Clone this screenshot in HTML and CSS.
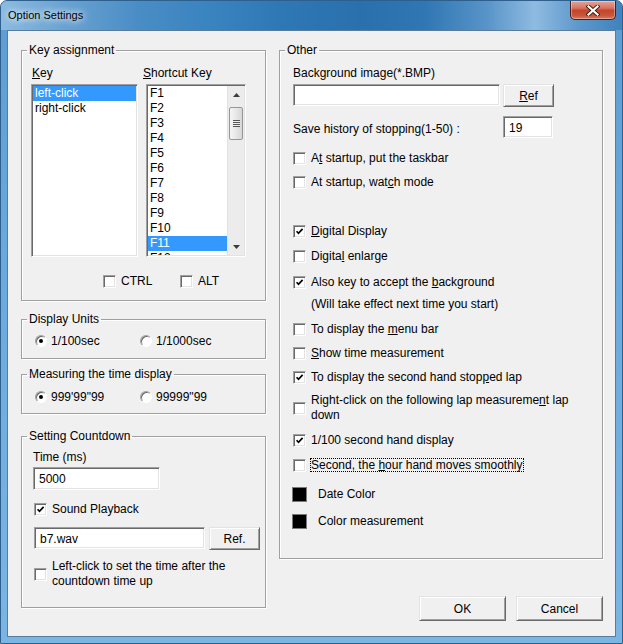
FILE: index.html
```html
<!DOCTYPE html>
<html>
<head>
<meta charset="utf-8">
<title>Option Settings</title>
<link rel="stylesheet" href="styles.css">
</head>
<body>
<div class="window">
  <div class="titlebar">
    <span class="title">Option Settings</span>
    <div class="close">
      <svg width="14" height="11" viewBox="0 0 14 11">
        <path d="M2.5 1.5 L11.5 9.5 M11.5 1.5 L2.5 9.5" stroke="#3b1d17" stroke-width="4" stroke-linecap="square"/>
        <path d="M2.5 1.5 L11.5 9.5 M11.5 1.5 L2.5 9.5" stroke="#ffffff" stroke-width="2.2" stroke-linecap="square"/>
      </svg>
    </div>
  </div>
  <div class="client">
    <div class="col-left">
      <fieldset class="group g-keys">
        <legend>Key assignment</legend>
        <div class="gbody keys-body">
          <div class="keys">
            <div class="keycol">
              <div class="lbl lbl-key"><u>K</u>ey</div>
              <div class="listbox lb-key">
                <div class="items">
                  <div class="item sel">left-click</div>
                  <div class="item">right-click</div>
                </div>
              </div>
            </div>
            <div class="keycol">
              <div class="lbl lbl-sc"><u>S</u>hortcut Key</div>
              <div class="listbox lb-sc">
                <div class="items">
                  <div class="item">F1</div>
                  <div class="item">F2</div>
                  <div class="item">F3</div>
                  <div class="item">F4</div>
                  <div class="item">F5</div>
                  <div class="item">F6</div>
                  <div class="item">F7</div>
                  <div class="item">F8</div>
                  <div class="item">F9</div>
                  <div class="item">F10</div>
                  <div class="item sel">F11</div>
                  <div class="item">F12</div>
                </div>
                <div class="sb">
                  <div class="sb-btn"><svg width="7" height="4" viewBox="0 0 7 4"><path d="M0 4 L3.5 0 L7 4Z" fill="#3c3c3c"/></svg></div>
                  <div class="sb-track">
                    <div class="sb-thumb"><span class="grip"></span></div>
                  </div>
                  <div class="sb-btn"><svg width="7" height="4" viewBox="0 0 7 4"><path d="M0 0 L3.5 4 L7 0Z" fill="#3c3c3c"/></svg></div>
                </div>
              </div>
            </div>
          </div>
          <div class="mods">
            <div class="chk w77"><span class="box"></span><span>CTRL</span></div>
            <div class="chk"><span class="box"></span><span>ALT</span></div>
          </div>
        </div>
      </fieldset>

      <fieldset class="group g-units">
        <legend>Display Units</legend>
        <div class="gbody radio-body">
          <div class="radios">
            <div class="rad"><span class="circle"><span class="dot"></span></span><span>1/100sec</span></div>
            <div class="rad"><span class="circle"></span><span>1/1000sec</span></div>
          </div>
        </div>
      </fieldset>

      <fieldset class="group g-measure">
        <legend>Measuring the time display</legend>
        <div class="gbody radio-body2">
          <div class="radios">
            <div class="rad"><span class="circle"><span class="dot"></span></span><span>999'99"99</span></div>
            <div class="rad"><span class="circle"></span><span>99999"99</span></div>
          </div>
        </div>
      </fieldset>

      <fieldset class="group g-count">
        <legend>Setting Countdown</legend>
        <div class="gbody count-body">
          <div class="lbl">Time (ms)</div>
          <div class="tb tb-time">5000</div>
          <div class="chk sound"><span class="box"><svg class="tick" width="9" height="9" viewBox="0 0 9 9"><path d="M1.6 4.2 L3.5 6.3 L7.6 1.9" fill="none" stroke="#000" stroke-width="1.7"/></svg></span><span>Sound Playback</span></div>
          <div class="wavrow">
            <div class="tb tb-wav">b7.wav</div>
            <div class="btn btn-ref">Ref.</div>
          </div>
          <div class="chk chk2 after"><span class="box"></span><span class="two">Left-click to set the time after the<br>countdown time up</span></div>
        </div>
      </fieldset>
    </div>

    <div class="col-right">
      <fieldset class="group g-other">
        <legend>Other</legend>
        <div class="gbody other-body">
          <div class="lbl">Background image(*.BMP)</div>
          <div class="bgrow">
            <div class="tb tb-bg"></div>
            <div class="btn btn-ref2"><u>R</u>ef</div>
          </div>
          <div class="histrow">
            <div class="histlbl">Save history of stopping(1-50) :</div>
            <div class="tb tb-hist">19</div>
          </div>

          <div class="chk r1"><span class="box"></span><span>A<u>t</u> startup, put the taskbar</span></div>
          <div class="chk r8"><span class="box"></span><span>At startup, wat<u>c</u>h mode</span></div>
          <div class="chk r33"><span class="box"><svg class="tick" width="9" height="9" viewBox="0 0 9 9"><path d="M1.6 4.2 L3.5 6.3 L7.6 1.9" fill="none" stroke="#000" stroke-width="1.7"/></svg></span><span><u>D</u>igital Display</span></div>
          <div class="chk r9"><span class="box"></span><span>Digita<u>l</u> enlarge</span></div>
          <div class="chk r10"><span class="box"><svg class="tick" width="9" height="9" viewBox="0 0 9 9"><path d="M1.6 4.2 L3.5 6.3 L7.6 1.9" fill="none" stroke="#000" stroke-width="1.7"/></svg></span><span>Also key to accept the <u>b</u>ackground</span></div>
          <div class="note">(Will take effect next time you start)</div>
          <div class="chk r9"><span class="box"></span><span>To display the <u>m</u>enu bar</span></div>
          <div class="chk r8"><span class="box"></span><span><u>S</u>how time measurement</span></div>
          <div class="chk r8"><span class="box"><svg class="tick" width="9" height="9" viewBox="0 0 9 9"><path d="M1.6 4.2 L3.5 6.3 L7.6 1.9" fill="none" stroke="#000" stroke-width="1.7"/></svg></span><span>To display the second hand stop<u>p</u>ed lap</span></div>
          <div class="chk chk2 r8"><span class="box"></span><span class="two">Right-click on the following lap measureme<u>n</u>t lap<br>down</span></div>
          <div class="chk r9"><span class="box"><svg class="tick" width="9" height="9" viewBox="0 0 9 9"><path d="M1.6 4.2 L3.5 6.3 L7.6 1.9" fill="none" stroke="#000" stroke-width="1.7"/></svg></span><span>1/100 second hand display</span></div>
          <div class="chk r9"><span class="box"></span><span class="focus">Second, the <u>h</u>our hand moves smoothly</span></div>

          <div class="colorrow c1"><span class="swatch"></span><span>Date Color</span></div>
          <div class="colorrow c2"><span class="swatch"></span><span>Color measurement</span></div>
        </div>
      </fieldset>
      <div class="actions">
        <div class="btn btn-dlg">OK</div>
        <div class="btn btn-dlg">Cancel</div>
      </div>
    </div>
  </div>
</div>
</body>
</html>
```

FILE: styles.css
```css
* { box-sizing: border-box; }

body {
  margin: 0;
  font-family: "Liberation Sans", Arial, sans-serif;
  font-size: 12px;
  color: #000;
  background: #ffffff;
}

u { text-decoration: underline; text-underline-offset: 1px; }

.window {
  width: 623px;
  height: 644px;
  border: 1px solid #2f5f8c;
  border-radius: 7px 7px 0 0;
  background: linear-gradient(to bottom, #5d9cd2 0%, #6aa9dc 40%, #79b6e4 100%);
  display: flex;
  flex-direction: column;
  overflow: hidden;
}

.titlebar {
  height: 29px;
  display: flex;
  align-items: flex-start;
  padding-left: 7px;
  background: linear-gradient(to right, #8bbbe0 0%, #6aa3d2 10%, #4a8dc5 22%, #3a84c0 33%, #2e78b5 45%, #2a70ad 58%, #2f76b3 68%, #5793c8 78%, #8ebbe0 86%, #5e98cc 93%, #3f82bd 100%);
}

.title {
  font-size: 11px;
  line-height: 13px;
  margin-top: 8px;
  color: #000;
  text-shadow: 0 0 6px #fff, 0 0 10px rgba(255,255,255,0.9);
}

.close {
  margin-left: auto;
  margin-right: 6px;
  width: 46px;
  height: 19px;
  border: 1px solid #4a1f18;
  border-top: none;
  border-radius: 0 0 5px 5px;
  background: linear-gradient(to bottom, #e5a496 0%, #d6735f 40%, #c2452c 52%, #c9553a 80%, #d77a5e 100%);
  box-shadow: inset 0 0 0 1px rgba(255,255,255,0.35);
  display: flex;
  align-items: center;
  justify-content: center;
}

.client {
  margin: 0 6px 6px 6px;
  flex: 1;
  background: #f0f0f0;
  border: 1px solid #5a7c9b;
  display: flex;
  align-items: flex-start;
  gap: 13px;
  padding: 12px 12px 0 13px;
}

.col-left { width: 245px; display: flex; flex-direction: column; }
.col-right { width: 324px; display: flex; flex-direction: column; }

.group {
  margin: 0;
  padding: 0;
  min-width: 0;
  border: 1px solid #a0a0a0;
  box-shadow: inset 1px 1px 0 #ffffff, 1px 1px 0 #ffffff;
}

.group legend {
  padding: 0 2px;
  margin-left: 5px;
  line-height: 14px;
  height: 14px;
}

.g-keys { height: 258px; }
.g-units { height: 47px; margin-top: 11px; }
.g-measure { height: 47px; margin-top: 8px; }
.g-count { height: 179px; margin-top: 15px; }
.g-other { height: 516px; }

.lbl { line-height: 14px; height: 14px; }

/* key assignment */
.keys-body { padding: 9px 0 0 9px; }
.keys { display: flex; gap: 8px; }
.keycol { display: flex; flex-direction: column; }
.lbl-key { padding-left: 1px; margin-bottom: 4px; }
.lbl-sc { margin-left: -3px; margin-bottom: 4px; }

.listbox {
  height: 173px;
  background: #fff;
  border: 1px solid;
  border-color: #a0a0a0 #ffffff #ffffff #a0a0a0;
  box-shadow: inset 1px 1px 0 #696969, inset -1px -1px 0 #e3e3e3;
  padding: 1px;
  display: flex;
  overflow: hidden;
}
.lb-key { width: 107px; }
.lb-sc { width: 100px; }

.items { flex: 1; overflow: hidden; }
.item { height: 15px; line-height: 15px; padding-left: 2px; white-space: nowrap; }
.item.sel { background: #3399ff; color: #fff; }

.sb {
  width: 17px;
  display: flex;
  flex-direction: column;
  background: #ececec;
  border-left: 1px solid #e2e2e2;
}
.sb-btn { height: 17px; display: flex; align-items: center; justify-content: center; }
.sb-track { flex: 1; padding: 4px 1px 0 1px; }
.sb-thumb {
  height: 33px;
  border: 1px solid #979797;
  border-radius: 2px;
  background: linear-gradient(to right, #f5f5f5 0%, #e8e8e8 50%, #d6d6d6 100%);
  display: flex;
  align-items: center;
  justify-content: center;
}
.grip {
  width: 7px;
  height: 7px;
  background: repeating-linear-gradient(to bottom, #555 0, #555 1px, #f0f0f0 1px, #f0f0f0 2px);
}

.mods { display: flex; margin-top: 16px; padding-left: 72px; }
.w77 { width: 77px; }

/* checkbox */
.chk { display: flex; align-items: center; height: 16px; gap: 5px; }
.box {
  width: 13px;
  height: 13px;
  flex: none;
  background: #fff;
  border: 1px solid;
  border-color: #a0a0a0 #ffffff #ffffff #a0a0a0;
  box-shadow: inset 1px 1px 0 #696969, inset -1px -1px 0 #e3e3e3;
  display: flex;
  align-items: center;
  justify-content: center;
}
.tick { display: block; }

.chk2 { height: auto; }
.two { line-height: 15px; }

/* radios */
.radio-body { padding: 7px 0 0 13px; }
.radio-body2 { padding: 8px 0 0 13px; }
.radios { display: flex; }
.rad { display: flex; align-items: center; height: 16px; gap: 4px; width: 105px; }
.circle {
  width: 12px;
  height: 12px;
  border-radius: 50%;
  background: #fff;
  border: 1px solid;
  border-color: #a0a0a0 #ffffff #ffffff #a0a0a0;
  box-shadow: inset 1px 1px 0 #696969;
  display: flex;
  align-items: center;
  justify-content: center;
}
.dot { width: 4px; height: 4px; border-radius: 50%; background: #000; }

/* text boxes and buttons */
.tb {
  height: 22px;
  background: #fff;
  border: 1px solid;
  border-color: #a0a0a0 #ffffff #ffffff #a0a0a0;
  box-shadow: inset 1px 1px 0 #696969, inset -1px -1px 0 #e3e3e3;
  padding: 4px 0 0 5px;
  line-height: 14px;
}
.btn {
  height: 23px;
  background: #f0f0f0;
  border: 1px solid;
  border-color: #e3e3e3 #696969 #696969 #e3e3e3;
  box-shadow: inset 1px 1px 0 #ffffff, inset -1px -1px 0 #a0a0a0;
  display: flex;
  align-items: center;
  justify-content: center;
}

/* countdown */
.count-body { padding: 7px 0 0 11px; }
.tb-time { width: 127px; height: 23px; margin-top: 3px; }
.sound { margin-top: 11px; padding-left: 1px; }
.wavrow { display: flex; gap: 4px; margin-top: 10px; padding-left: 1px; align-items: flex-start; }
.tb-wav { width: 171px; }
.btn-ref { width: 51px; }
.after { margin-top: 9px; padding-left: 1px; }

/* other */
.other-body { padding: 9px 0 0 13px; }
.bgrow { display: flex; gap: 3px; margin-top: 4px; align-items: flex-start; }
.tb-bg { width: 207px; }
.btn-ref2 { width: 51px; }
.histrow { display: flex; margin-top: 9px; align-items: flex-start; }
.histlbl { width: 210px; padding-top: 6px; line-height: 14px; }
.tb-hist { width: 50px; }

.r1 { margin-top: 12px; }
.r8 { margin-top: 8px; }
.r9 { margin-top: 9px; }
.r10 { margin-top: 10px; }
.r33 { margin-top: 33px; }

.note { margin-top: 7px; padding-left: 18px; line-height: 15px; }

.focus {
  border: 1px dotted #000;
  line-height: 12px;
  padding: 0 1px 0 0;
  margin-left: -1px;
}

.colorrow { display: flex; align-items: center; gap: 11px; height: 16px; margin-left: -1px; }
.c1 { margin-top: 13px; }
.c2 { margin-top: 11px; }
.swatch { width: 15px; height: 15px; background: #000; border: 1px solid #7a7a7a; flex: none; }

.actions { display: flex; justify-content: flex-end; gap: 10px; margin-top: 37px; }
.btn-dlg { width: 87px; height: 25px; }
```
